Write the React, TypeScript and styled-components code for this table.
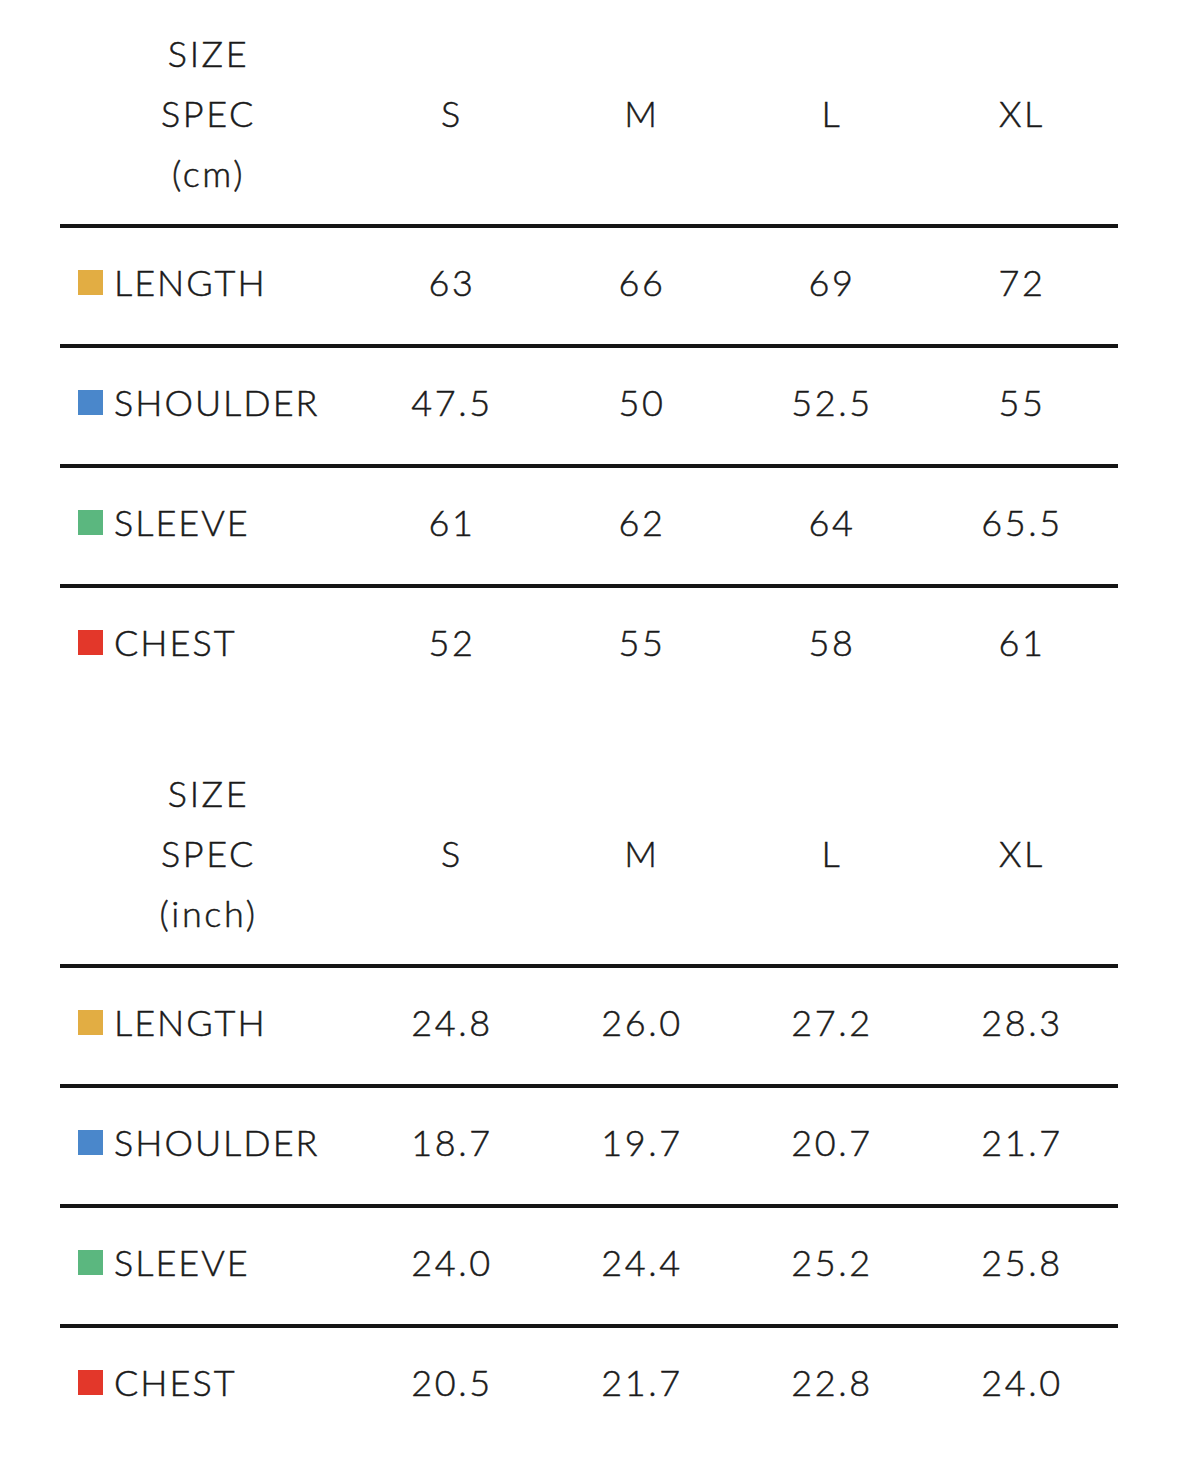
import React from "react";
import styled, { createGlobalStyle } from "styled-components";

const Global = createGlobalStyle`
  html, body { margin: 0; padding: 0; background: #ffffff; }
  body {
    font-family: "Lato", "Noto Sans", sans-serif;
    color: #1a1a1a;
    -webkit-text-stroke: 0.5px #1a1a1a;
  }
`;

const Page = styled.div`
  width: 1179px;
  min-height: 1484px;
  padding: 0 60px;
  box-sizing: border-box;
  display: flex;
  flex-direction: column;
`;

const Table = styled.section<{ $first?: boolean }>`
  width: 1058px;
  margin-top: ${(p) => (p.$first ? "0" : "36px")};
  display: flex;
  flex-direction: column;
`;

const Grid = styled.div`
  display: grid;
  grid-template-columns: 297px repeat(4, 190px);
  align-items: center;
`;

const HeaderRow = styled(Grid)`
  padding: 23px 0 21px;
`;

const BodyRow = styled(Grid)`
  box-sizing: border-box;
  height: 120px;
  padding-bottom: 8px;
  border-top: 4px solid #151515;
`;

const Cell = styled.div`
  font-size: 36px;
  line-height: 60px;
  letter-spacing: 2.6px;
  text-align: center;
  font-weight: 300;
  white-space: nowrap;
`;

const HeadTitle = styled(Cell)`
  display: flex;
  flex-direction: column;
  align-items: center;
`;

const Label = styled.div`
  display: flex;
  align-items: center;
  gap: 11px;
  padding-left: 18px;
  font-size: 36px;
  font-weight: 300;
  letter-spacing: 2px;
  white-space: nowrap;
`;

const Swatch = styled.span<{ $color: string }>`
  width: 25px;
  height: 25px;
  background: ${(p) => p.$color};
  flex: none;
`;

const sizes = ["S", "M", "L", "XL"];

const colors: Record<string, string> = {
  LENGTH: "#e2ad43",
  SHOULDER: "#4a87cb",
  SLEEVE: "#5bb77f",
  CHEST: "#e3372a",
};

type Spec = { unit: string; rows: [string, string[]][] };

const specs: Spec[] = [
  {
    unit: "(cm)",
    rows: [
      ["LENGTH", ["63", "66", "69", "72"]],
      ["SHOULDER", ["47.5", "50", "52.5", "55"]],
      ["SLEEVE", ["61", "62", "64", "65.5"]],
      ["CHEST", ["52", "55", "58", "61"]],
    ],
  },
  {
    unit: "(inch)",
    rows: [
      ["LENGTH", ["24.8", "26.0", "27.2", "28.3"]],
      ["SHOULDER", ["18.7", "19.7", "20.7", "21.7"]],
      ["SLEEVE", ["24.0", "24.4", "25.2", "25.8"]],
      ["CHEST", ["20.5", "21.7", "22.8", "24.0"]],
    ],
  },
];

export default function App() {
  return (
    <Page>
      <Global />
      {specs.map((spec, i) => (
        <Table key={spec.unit} $first={i === 0}>
          <HeaderRow>
            <HeadTitle>
              <span>SIZE</span>
              <span>SPEC</span>
              <span>{spec.unit}</span>
            </HeadTitle>
            {sizes.map((s) => (
              <Cell key={s}>{s}</Cell>
            ))}
          </HeaderRow>
          {spec.rows.map(([name, vals]) => (
            <BodyRow key={name}>
              <Label>
                <Swatch $color={colors[name]} />
                <span>{name}</span>
              </Label>
              {vals.map((v, j) => (
                <Cell key={j}>{v}</Cell>
              ))}
            </BodyRow>
          ))}
        </Table>
      ))}
    </Page>
  );
}
